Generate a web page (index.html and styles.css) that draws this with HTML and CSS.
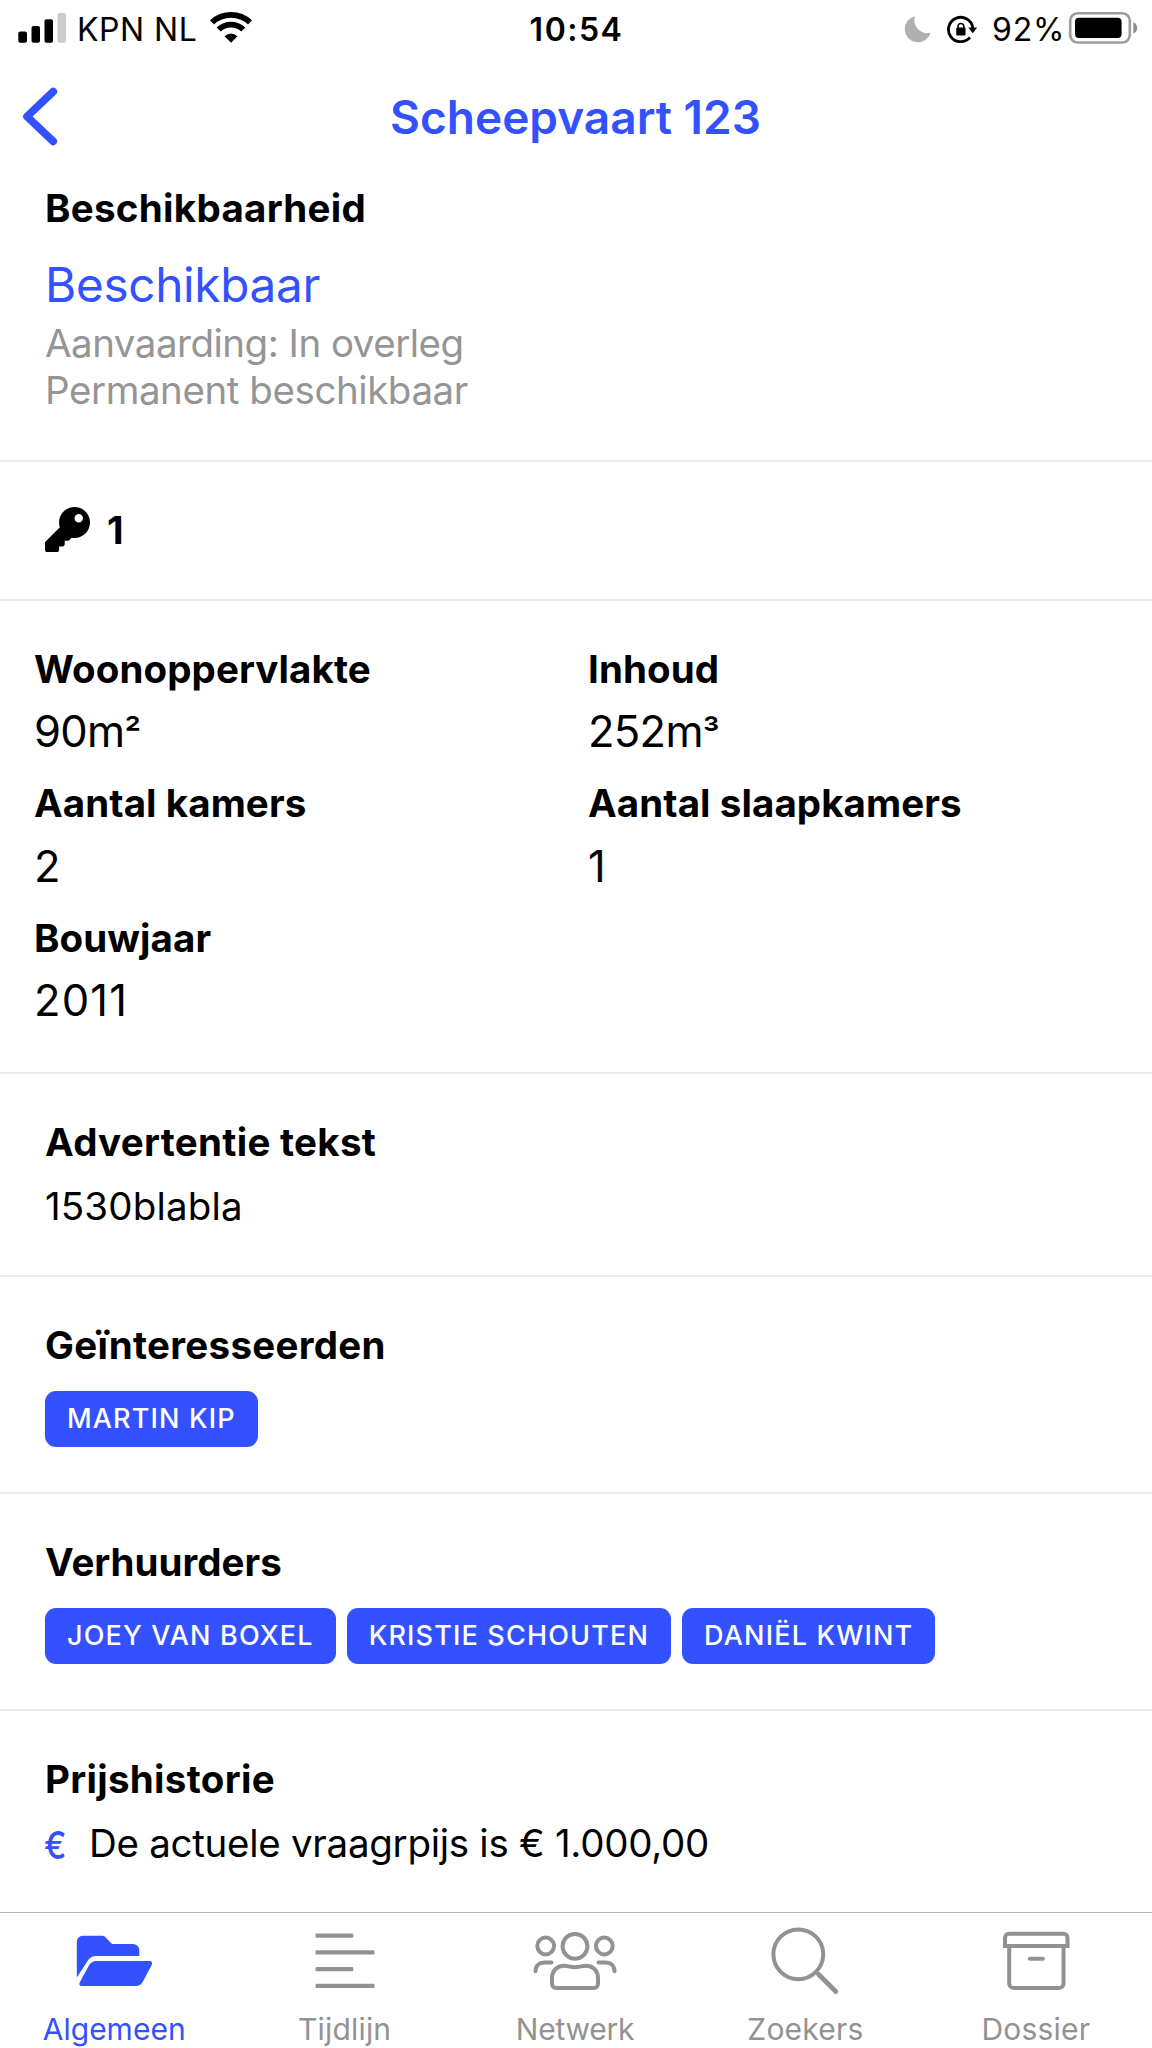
FILE: index.html
```
<!DOCTYPE html>
<html lang="nl">
<head>
    <meta charset="UTF-8">
    <meta name="viewport" content="width=device-width, initial-scale=1.0">
    <title>Scheepvaart 123</title>
    <link rel="stylesheet" href="styles.css">
</head>
<body>
    <div class="status-bar">
        <div class="status-left">
            <svg class="signal" width="48" height="58" viewBox="18 0 48 58">
                <rect x="18.3" y="31.5" width="8.7" height="11.3" rx="2"/>
                <rect x="31.5" y="26" width="8.5" height="16.8" rx="2"/>
                <rect x="44.5" y="19.3" width="8.5" height="23.5" rx="2"/>
                <rect x="57.5" y="13" width="8.5" height="29.8" rx="2" fill="#cbcbcb"/>
            </svg>
            <span class="carrier">KPN NL</span>
            <svg class="wifi" width="44" height="58" viewBox="209 0 44 58">
                <path d="M212 22.3A27.85 27.85 0 0 1 250 22.3" fill="none" stroke="#000" stroke-width="5.8"/>
                <path d="M218.7 29.5A18 18 0 0 1 243.3 29.5" fill="none" stroke="#000" stroke-width="5.8"/>
                <path d="M231 42.7L224.5 36.3Q231 30.5 237.5 36.3Z"/>
            </svg>
        </div>
        <span class="time">10:54</span>
        <div class="status-right">
            <svg class="moon" width="28" height="58" viewBox="904 0 28 58">
                <path d="M915 16.2A13.2 13.2 0 1 0 930.6 32.7A13 13 0 0 1 915 16.2Z" fill="#b0b0b0"/>
            </svg>
            <svg class="lock" width="32" height="58" viewBox="947 0 32 58">
                <path d="M972.8 28A12.2 12.2 0 1 0 970 37.4" fill="none" stroke="#000" stroke-width="2.8"/>
                <path d="M968.3 27.5H977.2L972.8 33.2Z"/>
                <rect x="956.3" y="27.5" width="9.2" height="8" rx="1"/>
                <path d="M958 28V26.3a2.9 2.9 0 0 1 5.8 0V28" fill="none" stroke="#000" stroke-width="1.5"/>
            </svg>
            <span class="percent">92%</span>
            <svg class="battery" width="70" height="58" viewBox="1068 0 70 58">
                <rect x="1070.2" y="13.3" width="59.6" height="29.2" rx="7.5" fill="none" stroke="#9c9c9c" stroke-width="2.6"/>
                <rect x="1075" y="17.8" width="46.6" height="20.2" rx="4"/>
                <path d="M1133.3 22.3Q1137.2 24.3 1137.2 28T1133.3 33.7Z" fill="#8c8c8c"/>
            </svg>
        </div>
    </div>

    <header class="nav">
        <a class="back">
            <svg width="36" height="60" viewBox="22 87 36 60">
                <path d="M53.2 91.7L27 116.5L53.2 141.3" fill="none" stroke="#3351ff" stroke-width="7.8" stroke-linecap="round" stroke-linejoin="round"/>
            </svg>
        </a>
        <h1>Scheepvaart 123</h1>
    </header>

    <main>
        <section class="card first">
            <h2>Beschikbaarheid</h2>
            <p class="state">Beschikbaar</p>
            <p class="sub">Aanvaarding: In overleg</p>
            <p class="sub">Permanent beschikbaar</p>
        </section>

        <section class="card keys">
            <svg width="45" height="45" viewBox="0 0 512 512">
                <path d="M512 176.001C512 273.203 433.202 352 336 352c-11.22 0-22.19-1.062-32.827-3.069l-24.012 27.014A23.999 23.999 0 0 1 261.223 384H224v40c0 13.255-10.745 24-24 24h-40v40c0 13.255-10.745 24-24 24H24c-13.255 0-24-10.745-24-24v-78.059c0-6.365 2.529-12.47 7.029-16.971l161.802-161.802C163.108 213.814 160 195.271 160 176 160 78.798 238.797.001 335.999 0 433.488-.001 512 78.511 512 176.001zM336 128c0 26.51 21.49 48 48 48s48-21.49 48-48-21.49-48-48-48-48 21.49-48 48z"/>
            </svg>
            <h2>1</h2>
        </section>

        <section class="card specs">
            <div class="spec">
                <h2>Woonoppervlakte</h2>
                <p class="area">90m<span class="power">²</span></p>
            </div>
            <div class="spec">
                <h2>Inhoud</h2>
                <p class="area">252m<span class="power">³</span></p>
            </div>
            <div class="spec">
                <h2>Aantal kamers</h2>
                <p>2</p>
            </div>
            <div class="spec">
                <h2>Aantal slaapkamers</h2>
                <p>1</p>
            </div>
            <div class="spec">
                <h2>Bouwjaar</h2>
                <p>2011</p>
            </div>
        </section>

        <section class="card">
            <h2>Advertentie tekst</h2>
            <p class="text ad">1530blabla</p>
        </section>

        <section class="card">
            <h2>Geïnteresseerden</h2>
            <div class="chips">
                <span class="chip">MARTIN KIP</span>
            </div>
        </section>

        <section class="card">
            <h2 class="tight">Verhuurders</h2>
            <div class="chips">
                <span class="chip">JOEY VAN BOXEL</span>
                <span class="chip">KRISTIE SCHOUTEN</span>
                <span class="chip">DANIËL KWINT</span>
            </div>
        </section>

        <section class="card last">
            <h2>Prijshistorie</h2>
            <div class="price">
                <span class="euro">€</span>
                <p class="text">De actuele vraagrpijs is € 1.000,00</p>
            </div>
        </section>
    </main>

    <nav class="tabs">
        <a class="tab active">
            <svg width="90" height="76" viewBox="0 0 90 76">
                <path d="M6.8 55.5V19.7a6 6 0 0 1 6-6H32.5q1.5 0 2.5 1L42 22H63a6.300 6.300 0 0 1 6.300 6.300V34H27C22.500 34 19.500 35.700 17.100 39.700Z"/>
                <path d="M27 39H79.500C82 39 82.800 41 81.700 43L73.500 58.500C71.500 62.300 69.500 64 65.500 64H11.800C9.500 64 8.800 62.200 9.800 60.200L18.500 44.200C20.500 40.500 23 39 27 39Z"/>
            </svg>
            <span>Algemeen</span>
        </a>
        <a class="tab timeline">
            <svg width="90" height="76" viewBox="0 0 90 76">
                <rect x="14.5" y="11.5" width="37.8" height="4.3" rx="1.2"/>
                <rect x="14.5" y="28.2" width="59" height="4.3" rx="1.2"/>
                <rect x="14.5" y="44.9" width="37.8" height="4.3" rx="1.2"/>
                <rect x="14.5" y="61.7" width="59" height="4.3" rx="1.2"/>
            </svg>
            <span>Tijdlijn</span>
        </a>
        <a class="tab network">
            <svg class="line" width="90" height="76" viewBox="0 0 90 76">
                <circle cx="44" cy="24.3" r="12.4"/>
                <circle cx="14.7" cy="24" r="8.4"/>
                <circle cx="73.3" cy="24" r="8.4"/>
                <path d="M25 66H63a4 4 0 0 0 4-4V56C67 49 62 43.700 55 43.700C51 43.700 49 45.300 44 45.300S37 43.700 33 43.700C26 43.700 21 49 21 56V62a4 4 0 0 0 4 4Z"/>
                <path d="M20.5 40.600H13.500C8 40.600 4.500 44 4.500 49.300"/>
                <path d="M67.5 40.600H74.500C80 40.600 83.500 44 83.500 49.300"/>
            </svg>
            <span>Netwerk</span>
        </a>
        <a class="tab">
            <svg class="line" width="90" height="76" viewBox="0 0 90 76">
                <circle cx="37.3" cy="32.3" r="24.9"/>
                <path d="M57.5 52.2L74.8 69.5" stroke-width="4.8"/>
            </svg>
            <span>Zoekers</span>
        </a>
        <a class="tab">
            <svg class="line" width="90" height="76" viewBox="0 0 90 76">
                <path d="M13 24V15.700a4 4 0 0 1 4-4H71.500a4 4 0 0 1 4 4V24Z"/>
                <path d="M17.200 24V61.700a4.200 4.200 0 0 0 4.200 4.200H67.300a4.200 4.200 0 0 0 4.200-4.200V24"/>
                <path d="M37.800 36.700H50.800"/>
            </svg>
            <span>Dossier</span>
        </a>
    </nav>
</body>
</html>
```
FILE: styles.css
```
* {
    box-sizing: border-box;
}

body, h1, h2, p {
    margin: 0;
    padding: 0;
}

body {
    width: 1152px;
    height: 2048px;
    display: flex;
    flex-direction: column;
    overflow: hidden;
    background: #fff;
    color: #000;
    font-family: Inter, "Liberation Sans", sans-serif;
}

svg {
    display: block;
    flex: none;
}

/* Status bar */
.status-bar {
    display: grid;
    grid-template-columns: 1fr auto 1fr;
    align-items: center;
    height: 58px;
    padding: 0 14px 0 18px;
    font-size: 32px;
    line-height: 58px;
}

.status-left, .status-right {
    display: flex;
    align-items: center;
}

.status-right {
    justify-content: flex-end;
}

.carrier {
    width: 132px;
    padding: 2px 0 0 11px;
    letter-spacing: 0.5px;
    line-height: 56px;
    white-space: nowrap;
}

.wifi {
    margin-left: 11px;
}

.time {
    padding: 2px 3px 0 0;
    font-weight: 600;
    line-height: 56px;
    letter-spacing: 1.5px;
}

.lock {
    margin-left: 15px;
}

.percent {
    width: 76px;
    margin-left: 13px;
    padding-top: 2px;
    line-height: 56px;
    letter-spacing: 0.8px;
}

/* Title bar */
.nav {
    display: grid;
    grid-template-columns: 1fr auto 1fr;
    align-items: center;
    height: 118px;
    padding: 0 23px 0 22px;
}

h1 {
    color: #3351ff;
    font-size: 46px;
    font-weight: 600;
    line-height: 60px;
}

/* Content */
main {
    flex: 1;
}

.card {
    padding: 45px;
    border-bottom: 2px solid #ebebeb;
}

.card.last {
    border-bottom: none;
}

h2 {
    font-size: 38.5px;
    font-weight: 700;
    line-height: 47px;
    letter-spacing: 0.3px;
}

h2.tight {
    letter-spacing: 0;
}

.first {
    padding: 9px 45px 46px;
}

.state {
    margin: 25px 0 6px;
    color: #3351ff;
    font-size: 47.7px;
    line-height: 57px;
    letter-spacing: -0.3px;
}

.sub {
    color: #959595;
    font-size: 38.5px;
    line-height: 47px;
    letter-spacing: -0.43px;
}

.sub:nth-child(3) {
    letter-spacing: -0.5px;
}

.keys {
    display: flex;
    align-items: center;
    gap: 17px;
    padding: 44px 45px 46px;
}

.keys h2 {
    padding-top: 2px;
    line-height: 45px;
}

.specs {
    display: grid;
    grid-template-columns: 554px 1fr;
    padding: 44.5px 34px 22.7px;
}

.spec {
    height: 134.6px;
}

.spec h2 {
    letter-spacing: 0.08px;
}

.spec p {
    margin-top: 12.5px;
    font-size: 43.5px;
    line-height: 53px;
    letter-spacing: 1.2px;
}

.spec .area {
    letter-spacing: -0.7px;
}

.power {
    font-size: 37px;
    font-weight: 500;
    line-height: 1;
}

.text {
    font-size: 38.5px;
    line-height: 47px;
    letter-spacing: -0.28px;
}

.ad {
    margin-top: 17px;
    letter-spacing: 0.15px;
}

.chips {
    display: flex;
    gap: 11px;
    margin-top: 22px;
}

.chip {
    height: 56px;
    padding: 0 22px;
    border-radius: 11px;
    background: #3351ff;
    color: #fff;
    font-size: 27px;
    font-weight: 500;
    line-height: 55px;
    letter-spacing: 1.17px;
}

.price {
    display: flex;
    align-items: center;
    margin-top: 17px;
}

.euro {
    width: 44px;
    color: #3351ff;
    font-size: 38.5px;
    font-weight: 500;
    line-height: 47px;
    transform: translate(-1px, 2px) scaleX(0.87);
    transform-origin: left center;
}

/* Bottom tabs */
.tabs {
    display: grid;
    grid-template-columns: repeat(5, 1fr);
    height: 136px;
    border-top: 1px solid #b4b4b4;
}

.tab {
    display: flex;
    flex-direction: column;
    align-items: center;
    gap: 13px;
    padding-top: 9px;
    color: #929292;
    fill: #929292;
    font-size: 30px;
    line-height: 36px;
    letter-spacing: 0.2px;
}

.tab span {
    margin-right: 2px;
}

.tab.active {
    color: #3351ff;
    fill: #3351ff;
    letter-spacing: 0;
}

.network {
    letter-spacing: -0.25px;
}

.line {
    fill: none;
    stroke: #929292;
    stroke-width: 4;
    stroke-linecap: round;
}
```
